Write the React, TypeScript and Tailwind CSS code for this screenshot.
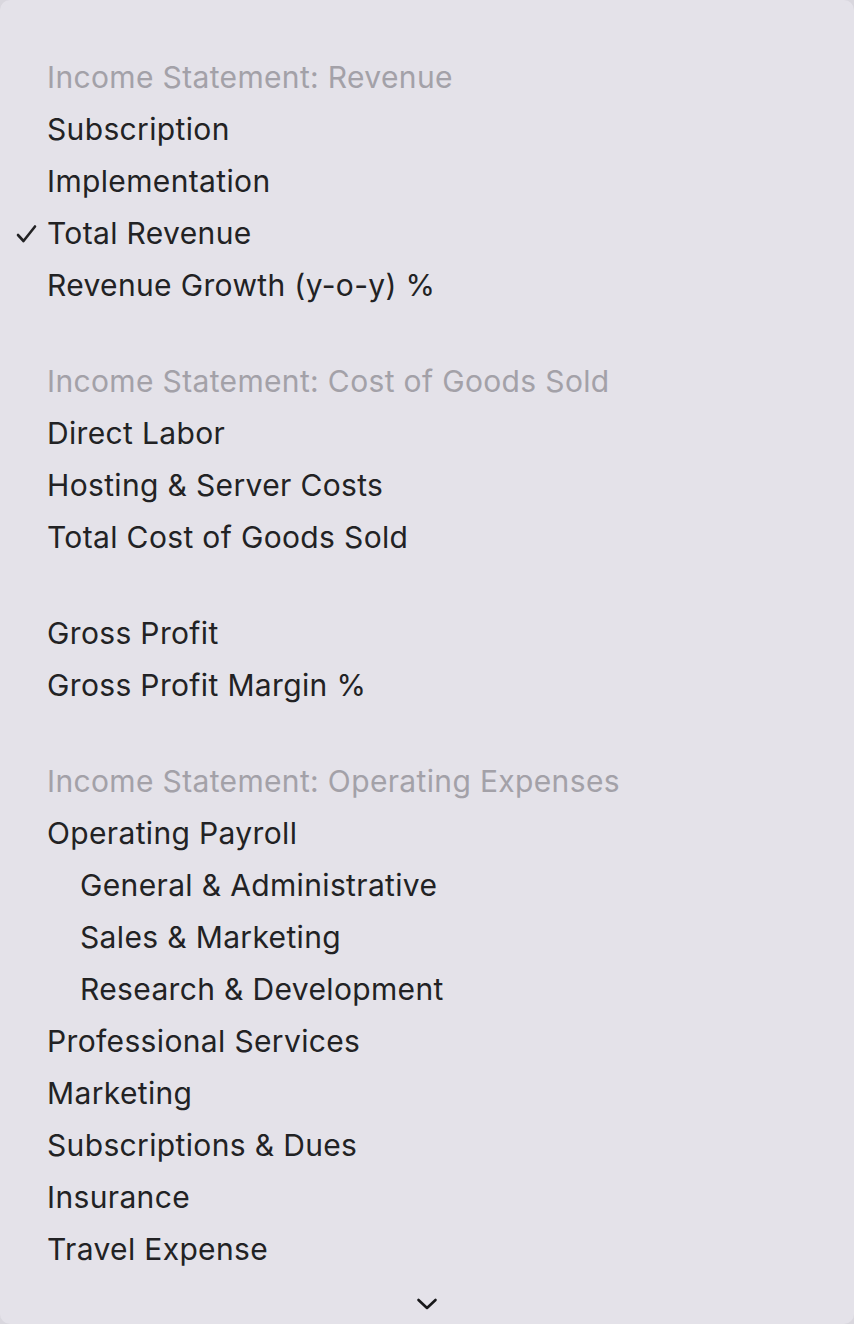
import React from "react";

type Item = { label: string; kind?: "header" | "sub"; checked?: boolean };

const groups: Item[][] = [
  [
    { label: "Income Statement: Revenue", kind: "header" },
    { label: "Subscription" },
    { label: "Implementation" },
    { label: "Total Revenue", checked: true },
    { label: "Revenue Growth (y-o-y) %" },
  ],
  [
    { label: "Income Statement: Cost of Goods Sold", kind: "header" },
    { label: "Direct Labor" },
    { label: "Hosting & Server Costs" },
    { label: "Total Cost of Goods Sold" },
  ],
  [{ label: "Gross Profit" }, { label: "Gross Profit Margin %" }],
  [
    { label: "Income Statement: Operating Expenses", kind: "header" },
    { label: "Operating Payroll" },
    { label: "General & Administrative", kind: "sub" },
    { label: "Sales & Marketing", kind: "sub" },
    { label: "Research & Development", kind: "sub" },
    { label: "Professional Services" },
    { label: "Marketing" },
    { label: "Subscriptions & Dues" },
    { label: "Insurance" },
    { label: "Travel Expense" },
  ],
];

function Row({ item }: { item: Item }) {
  return (
    <div className="relative flex h-[52px] items-center">
      {item.checked && (
        <span className="absolute left-[15px] top-[17px]">
          <svg width="23" height="20" viewBox="0 0 23 20" fill="none">
            <path d="M3 11 L8.5 17 L20 2.5" stroke="#222224" strokeWidth="2.6" strokeLinecap="round" strokeLinejoin="round" />
          </svg>
        </span>
      )}
      <span
        className={
          item.kind === "header"
            ? "pl-[47px] text-[#a3a1a8]"
            : item.kind === "sub"
            ? "pl-[80px] text-[#222224]"
            : "pl-[47px] text-[#222224]"
        }
      >
        {item.label}
      </span>
    </div>
  );
}

export default function App() {
  return (
    <div className="h-[1324px] w-[854px] overflow-hidden bg-[#d9d7de]">
      <div
        className="relative flex h-full w-full flex-col rounded-[10px] bg-[#e4e2e9] pt-[51px] text-[30px] tracking-[0.35px]"
        style={{ fontFamily: "Inter, 'Noto Sans', sans-serif" }}
      >
        <div className="flex flex-col gap-[44px]">
          {groups.map((g, i) => (
            <div key={i} className="flex flex-col">
              {g.map((item) => (
                <Row key={item.label} item={item} />
              ))}
            </div>
          ))}
        </div>
        <div className="mt-auto flex h-[46px] items-start justify-center pt-[20px]">
          <svg width="22" height="12" viewBox="0 0 22 12" fill="none">
            <path d="M2.5 2 L11 10 L19.5 2" stroke="#18181a" strokeWidth="2.6" strokeLinecap="round" strokeLinejoin="round" />
          </svg>
        </div>
      </div>
    </div>
  );
}
